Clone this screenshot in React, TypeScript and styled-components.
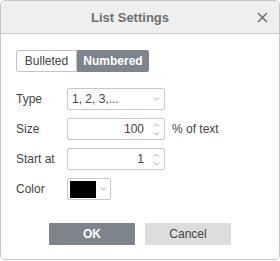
import styled, { createGlobalStyle } from 'styled-components';

const GlobalStyle = createGlobalStyle`
  html, body {
    margin: 0;
    padding: 0;
    background: #ffffff;
  }
  body {
    font-family: "Liberation Sans", Arial, sans-serif;
    font-size: 12px;
    color: #444444;
  }
`;

const Chevron = ({ up }: { up?: boolean }) => (
  <svg width="7" height="4" viewBox="0 0 7 4">
    <path
      d={up ? 'M1 3.5 L3.5 1 L6 3.5' : 'M1 0.5 L3.5 3 L6 0.5'}
      fill="none"
      stroke="#9a9a9a"
      strokeWidth="0.9"
    />
  </svg>
);

const App = () => {
  return (
    <>
      <GlobalStyle />
      <Dialog>
        <Header>
          <Title>List Settings</Title>
          <CloseButton aria-label="Close">
            <svg width="11" height="11" viewBox="0 0 11 11">
              <path d="M1 1 L10 10 M10 1 L1 10" stroke="#707070" strokeWidth="1.5" />
            </svg>
          </CloseButton>
        </Header>
        <Body>
          <Segmented>
            <SegButton>Bulleted</SegButton>
            <SegButton $active>Numbered</SegButton>
          </Segmented>

          <Form>
            <Row>
              <Label>Type</Label>
              <Field $width={98}>
                <Value>1, 2, 3,...</Value>
                <Caret>
                  <Chevron />
                </Caret>
              </Field>
            </Row>
            <Row>
              <Label>Size</Label>
              <Field $width={98}>
                <Value $right>100</Value>
                <Spinner>
                  <Chevron up />
                  <Chevron />
                </Spinner>
              </Field>
              <Unit>% of text</Unit>
            </Row>
            <Row>
              <Label>Start at</Label>
              <Field $width={98}>
                <Value $right>1</Value>
                <Spinner>
                  <Chevron up />
                  <Chevron />
                </Spinner>
              </Field>
            </Row>
            <Row>
              <Label>Color</Label>
              <Field $width={44}>
                <Swatch />
                <Caret>
                  <Chevron />
                </Caret>
              </Field>
            </Row>
          </Form>

          <Footer>
            <Button $primary>OK</Button>
            <Button>Cancel</Button>
          </Footer>
        </Body>
      </Dialog>
    </>
  );
};

const Dialog = styled.div`
  width: 280px;
  height: 260px;
  box-sizing: border-box;
  border: 1px solid #c6c6c6;
  border-radius: 5px;
  overflow: hidden;
  background: #ffffff;
  display: flex;
  flex-direction: column;
`;

const Header = styled.div`
  height: 32px;
  flex: none;
  display: flex;
  align-items: center;
  background: #efefef;
  border-bottom: 1px solid #cbcbcb;
  padding-right: 2px;
`;

const Title = styled.div`
  flex: 1;
  text-align: center;
  padding-left: 12px;
  font-size: 13px;
  font-weight: bold;
  color: #6f6f6f;
`;

const CloseButton = styled.button`
  width: 30px;
  height: 30px;
  border: none;
  background: transparent;
  padding: 0;
  display: flex;
  align-items: center;
  justify-content: center;
  cursor: pointer;
`;

const Body = styled.div`
  padding: 16px 15px 0;
  display: flex;
  flex-direction: column;
`;

const Segmented = styled.div`
  display: flex;
  align-self: flex-start;
`;

const SegButton = styled.button<{ $active?: boolean }>`
  height: 22px;
  box-sizing: border-box;
  padding: 0;
  font-family: inherit;
  font-size: 12px;
  font-weight: ${(p) => (p.$active ? 'bold' : 'normal')};
  color: ${(p) => (p.$active ? '#ffffff' : '#444444')};
  background: ${(p) => (p.$active ? '#7d848b' : '#ffffff')};
  border: 1px solid ${(p) => (p.$active ? '#7d848b' : '#c4c4c4')};
  border-radius: ${(p) => (p.$active ? '0 2px 2px 0' : '2px 0 0 2px')};
  width: ${(p) => (p.$active ? '72px' : '61px')};
`;

const Form = styled.div`
  margin-top: 16px;
  display: flex;
  flex-direction: column;
  gap: 8px;
`;

const Row = styled.div`
  display: flex;
  align-items: center;
  height: 22px;
`;

const Label = styled.div`
  width: 51px;
  color: #444444;
`;

const Field = styled.div<{ $width: number }>`
  width: ${(p) => p.$width}px;
  height: 22px;
  box-sizing: border-box;
  border: 1px solid #c8c8c8;
  border-radius: 2px;
  display: flex;
  align-items: center;
  padding: 0 0 0 4px;
`;

const Value = styled.div<{ $right?: boolean }>`
  flex: 1;
  text-align: ${(p) => (p.$right ? 'right' : 'left')};
  color: #444444;
  padding-right: ${(p) => (p.$right ? '4px' : '0')};
`;

const Caret = styled.div`
  width: 16px;
  display: flex;
  align-items: center;
  justify-content: center;
`;

const Spinner = styled.div`
  width: 16px;
  display: flex;
  flex-direction: column;
  align-items: center;
  gap: 5px;
`;

const Swatch = styled.div`
  width: 30px;
  height: 17px;
  background: #000000;
  margin-left: -2px;
`;

const Unit = styled.div`
  margin-left: 7px;
  color: #444444;
`;

const Footer = styled.div`
  margin-top: 23px;
  display: flex;
  justify-content: center;
  gap: 10px;
`;

const Button = styled.button<{ $primary?: boolean }>`
  width: 86px;
  height: 22px;
  border: none;
  border-radius: 1px;
  font-family: inherit;
  font-size: 12px;
  font-weight: ${(p) => (p.$primary ? 'bold' : 'normal')};
  color: ${(p) => (p.$primary ? '#ffffff' : '#444444')};
  background: ${(p) => (p.$primary ? '#7d848b' : '#dddddd')};
  cursor: pointer;
`;

export default App;
